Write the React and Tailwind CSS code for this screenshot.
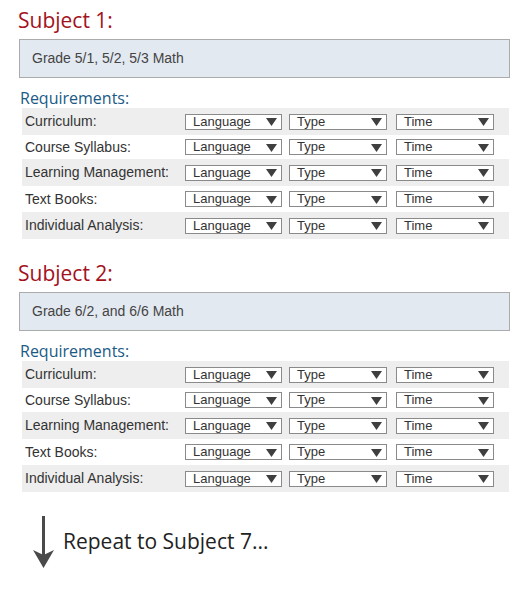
import React from "react";

const rowsData = [
  { label: "Curriculum:", h: "h-[27px]", gray: true },
  { label: "Course Syllabus:", h: "h-[24px]", gray: false },
  { label: "Learning Management:", h: "h-[27px]", gray: true },
  { label: "Text Books:", h: "h-[26px]", gray: false },
  { label: "Individual Analysis:", h: "h-[27px]", gray: true },
];

function Select({ text, w }) {
  return (
    <div
      className={`${w} h-[16px] flex items-center justify-between border border-[#8a8a8a] bg-white pl-[7px] pr-[4px] text-[13px] leading-none text-[#333]`}
      style={{ fontFamily: '"Liberation Sans", Arial, sans-serif' }}
    >
      <span className="-mt-px">{text}</span>
      <svg width="11" height="9" viewBox="0 0 11 9">
        <polygon points="0,1 11,1 5.5,9" fill="#3f3f3f" />
      </svg>
    </div>
  );
}

function Subject({ n, grade }) {
  return (
    <div>
      <div
        className="text-[21px] leading-[26px] text-[#a3111c]"
        style={{ fontFamily: '"Open Sans", sans-serif' }}
      >
        Subject {n}:
      </div>
      <div
        className="mt-[6px] ml-px w-[491px] h-[39px] border border-[#ababab] bg-[#e3e9f1] flex items-center pl-[12px] text-[14px] text-[#444]"
        style={{ fontFamily: '"Liberation Sans", Arial, sans-serif' }}
      >
        {grade}
      </div>
      <div
        className="mt-[11px] ml-[2px] text-[16px] leading-[19px] text-[#1b5a86]"
        style={{ fontFamily: '"Open Sans", sans-serif' }}
      >
        Requirements:
      </div>
      <div className="ml-[4px] w-[487px]">
        {rowsData.map((r) => (
          <div
            key={r.label}
            className={`${r.h} flex items-center ${r.gray ? "bg-[#eeeeee]" : "bg-white"}`}
          >
            <div
              className="w-[163px] pl-[3px] text-[14px] text-[#333]"
              style={{ fontFamily: '"Liberation Sans", Arial, sans-serif' }}
            >
              {r.label}
            </div>
            <Select text="Language" w="w-[97px]" />
            <div className="w-[7px]" />
            <Select text="Type" w="w-[98px]" />
            <div className="w-[9px]" />
            <Select text="Time" w="w-[98px]" />
          </div>
        ))}
      </div>
    </div>
  );
}

export default function App() {
  return (
    <div className="w-[530px] h-[600px] bg-white pl-[18px] pt-[7px]">
      <Subject n={1} grade="Grade 5/1, 5/2, 5/3 Math" />
      <div className="h-[21px]" />
      <Subject n={2} grade="Grade 6/2, and 6/6 Math" />
      <div className="mt-[24px] flex items-start">
        <svg width="24" height="52" viewBox="0 0 24 52" className="ml-[14px]">
          <rect x="10" y="0" width="3" height="40" fill="#4a4a4a" />
          <polygon points="1,34 11.5,39 22,34 11.5,52" fill="#4a4a4a" />
        </svg>
        <div
          className="ml-[7px] mt-[12px] text-[21px] leading-[26px] text-[#222]"
          style={{ fontFamily: '"Open Sans", sans-serif' }}
        >
          Repeat to Subject 7...
        </div>
      </div>
    </div>
  );
}
